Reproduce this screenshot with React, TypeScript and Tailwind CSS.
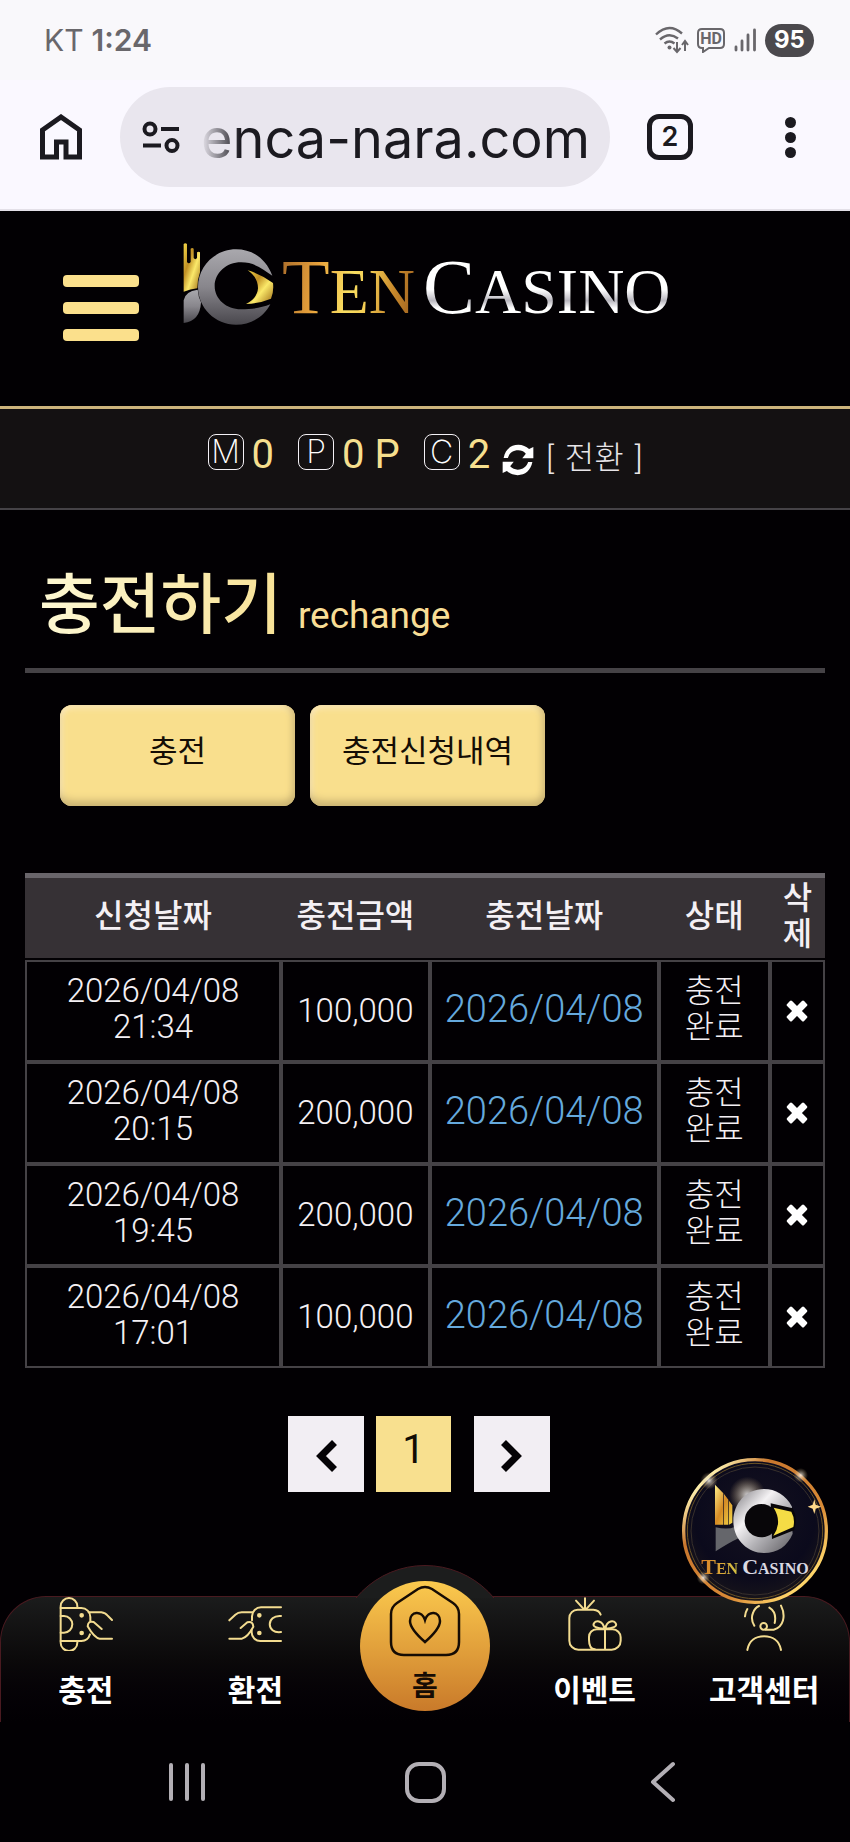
import type { ReactNode } from "react";

type Recharge = { date: string; time: string; amount: string; done: string };

const recharges: Recharge[] = [
  { date: "2026/04/08", time: "21:34", amount: "100,000", done: "2026/04/08" },
  { date: "2026/04/08", time: "20:15", amount: "200,000", done: "2026/04/08" },
  { date: "2026/04/08", time: "19:45", amount: "200,000", done: "2026/04/08" },
  { date: "2026/04/08", time: "17:01", amount: "100,000", done: "2026/04/08" },
];

function StatusBar() {
  return (
    <div className="flex h-20 items-center justify-between bg-[#f9f8fb] pr-9 pl-11 text-[#69676b]">
      <div className="flex items-baseline gap-2 text-[30px] leading-10">
        <span>KT</span>
        <span className="font-semibold">1:24</span>
      </div>
      <div className="flex items-center gap-2">
        <svg width="34" height="28" viewBox="0 0 34 28" fill="none" stroke="currentColor" strokeWidth="2.4">
          <path d="M1 8.5Q14-4 27 7.5M5 13.5q9-8 18-1M9.500 17.500q5-4 10 0" />
          <circle cx="14.500" cy="21.500" r="2" fill="currentColor" stroke="none" />
          <path d="M22 16v9M18.500 22l3.500 4 3.500-4M30 25v-9M27 19l3-4 3 4" strokeWidth="2" />
        </svg>
        <span className="relative flex h-6 items-start">
          <svg width="28" height="25" viewBox="0 0 28 25" fill="none" stroke="currentColor" strokeWidth="2">
            <path d="M5 1h18q4 0 4 4v11q0 4-4 4H12l-6 4v-4H5q-4 0-4-4V5q0-4 4-4z" />
          </svg>
          <span className="absolute inset-x-0 top-[3px] text-center font-[Roboto,sans-serif] text-[16px] leading-4 font-bold">
            HD
          </span>
        </span>
        <svg width="24" height="26" viewBox="0 0 24 26" fill="none" stroke="currentColor" strokeWidth="2.800" strokeLinecap="round">
          <path d="M3 20v3M9 14v9M15 8v15M21.500 3v20" />
        </svg>
        <span className="flex h-[33px] w-[49px] items-center justify-center rounded-full bg-[#4b494d] text-[24px] font-bold text-white">
          95
        </span>
      </div>
    </div>
  );
}

function BrowserBar() {
  return (
    <div className="flex h-[131px] items-start border-b-2 border-[#e3e0e8] bg-[#faf8ff] pt-[7px] pl-10 text-[#1b1a20]">
      <button aria-label="홈페이지" className="flex h-[100px] items-center">
        <svg width="42" height="46" viewBox="0 0 42 46" fill="none" stroke="currentColor" strokeWidth="5">
          <path d="M2.500 43V16L21 3l18.500 13v27H26V28h-9.500v15z" />
        </svg>
      </button>
      <div className="ml-[38px] flex h-[100px] min-w-0 flex-1 items-center justify-between rounded-full bg-[#e9e6ee] pr-5 pl-[22px]">
        <svg width="38" height="34" viewBox="0 0 38 34" fill="none" stroke="currentColor" strokeWidth="4" className="shrink-0">
          <circle cx="8" cy="9" r="5.500" />
          <path d="M19 9h18M1 25.500h18" />
          <circle cx="30" cy="25.500" r="5.500" />
        </svg>
        <span className="bg-linear-to-r from-transparent to-[#1b1a20] to-10% bg-clip-text pt-1 text-[54px] leading-[72px] whitespace-nowrap text-transparent">
          enca-nara.com
        </span>
      </div>
      <button aria-label="탭" className="ml-[37px] flex h-[100px] items-center">
        <span className="flex h-[46px] w-[46px] items-center justify-center rounded-xl border-[5px] border-current text-[27px] font-semibold">
          2
        </span>
      </button>
      <button aria-label="메뉴" className="mr-[54px] ml-[92px] flex h-[100px] flex-col items-center justify-center gap-1">
        <span className="h-[11px] w-[11px] rounded-full bg-current" />
        <span className="h-[11px] w-[11px] rounded-full bg-current" />
        <span className="h-[11px] w-[11px] rounded-full bg-current" />
      </button>
    </div>
  );
}

function LogoMark() {
  return (
    <svg width="91" height="82" viewBox="551 98 273 246" className="shrink-0">
      <defs>
        <linearGradient id="steel" x1="0" y1="0" x2="0" y2="1">
          <stop offset="0" stopColor="#a9a8ad" />
          <stop offset="0.5" stopColor="#88868c" />
          <stop offset="1" stopColor="#49474d" />
        </linearGradient>
        <linearGradient id="gold" x1="0" y1="0" x2="1" y2="1">
          <stop offset="0" stopColor="#f3d748" />
          <stop offset="0.35" stopColor="#c08f24" />
          <stop offset="0.6" stopColor="#fbe96a" />
          <stop offset="1" stopColor="#9c6a14" />
        </linearGradient>
      </defs>
      <path
        fill="url(#gold)"
        d="M553 101q5-5 10 0v54q5 8 11 0v-40q5-4 9 0v28q5 7 10 0v-17q5-4 9 0v60q-8 22-8 48-21 2-41 10z"
      />
      <path fill="url(#steel)" d="M553 338v-68q4-27 42-32 2 22 10 38-3 57-52 62z" />
      <path
        fill="url(#steel)"
        d="M819 196C800 145 760 117 710 117c-62 0-114 50-114 113s52 113 114 113c44 0 84-23 103-61-28 11-55 15-88 15-44 0-79-31-79-70s35-71 79-71c42 0 66 21 94 40z"
      />
      <path fill="url(#gold)" d="M745 180q40 11 76 38 3 26-6 47-34 14-75 16 34-17 36-47 0-33-31-54z" />
    </svg>
  );
}

function SiteHeader() {
  return (
    <header className="flex h-[198px] items-start border-b-[3px] border-[#cdb47c] bg-[#020003] pl-[63px]">
      <button aria-label="전체 메뉴" className="mt-16 flex w-[76px] shrink-0 flex-col gap-[15px]">
        <span className="h-3 rounded-sm bg-[#fbe08c]" />
        <span className="h-3 rounded-sm bg-[#fbe08c]" />
        <span className="h-3 rounded-sm bg-[#fbe08c]" />
      </button>
      <a href="#main" className="mt-8 ml-11 flex items-start whitespace-nowrap">
        <LogoMark />
        <span className="ml-2 flex items-baseline gap-2 font-['Liberation_Serif',serif] text-[64px] leading-[88px]">
          <span className="bg-linear-[100deg,#a86a2a_0%,#e9a33c_28%,#f8de62_50%,#f5cf55_62%,#c98a2c_80%,#96591d_100%] bg-clip-text text-transparent">
            <span className="text-[78px]">T</span>EN
          </span>
          <span className="bg-linear-[180deg,#ffffff_50%,#b9b7bf_62%,#ffffff_70%] bg-clip-text text-transparent">
            <span className="text-[78px]">C</span>ASINO
          </span>
        </span>
      </a>
    </header>
  );
}

function LetterBox({ children }: { children: ReactNode }) {
  return (
    <span className="flex h-9 w-9 items-center justify-center rounded-lg border border-[#f4f1f6] font-[Inter,sans-serif] text-[32px] font-extralight text-white">
      {children}
    </span>
  );
}

function BalanceBar() {
  return (
    <div className="flex h-[101px] items-start justify-center border-b-2 border-[#454246] bg-[#141112] pt-[25px] text-[40px] leading-9 text-[#f6df8e]">
      <div className="flex gap-2">
        <LetterBox>M</LetterBox>
        <span className="pt-[3px]">0</span>
      </div>
      <div className="ml-6 flex gap-2">
        <LetterBox>P</LetterBox>
        <span className="pt-[3px]">0 P</span>
      </div>
      <div className="ml-6 flex gap-2">
        <LetterBox>C</LetterBox>
        <span className="pt-[3px]">2</span>
      </div>
      <button aria-label="새로고침" className="ml-3 pt-[10px] text-white">
        <svg width="32" height="32" viewBox="230 700 98 97" fill="currentColor">
          <path d="M235 742C240 716 257 702 280 702c13 0 24 5 33 13l13-6v34h-34l11-14c-7-7-14-10-23-10-16 0-27 8-32 23z" />
          <path d="M323 755C318 781 301 795 278 795c-13 0-24-5-33-13l-13 6v-34h34l-11 14c7 7 14 10 23 10 16 0 27-8 32-23z" />
        </svg>
      </button>
      <button className="ml-3 flex gap-[11px] pt-1 text-[32px] leading-10 font-light whitespace-nowrap text-[#e8e5e8]">
        <span>[</span>
        <span>전환</span>
        <span>]</span>
      </button>
    </div>
  );
}

function GoldButton({ children }: { children: ReactNode }) {
  return (
    <button className="h-[101px] w-[235px] rounded-xl bg-[#f9df8d] pb-[6px] text-[31px] text-[#140d05] shadow-[inset_0_-8px_8px_-3px_#c9b272,inset_-6px_0_6px_-3px_#d6be7c,inset_0_5px_6px_-2px_#fbe9bb,inset_5px_0_6px_-3px_#fbe9bb]">
      {children}
    </button>
  );
}

function RechargeTable() {
  const cell = "h-[102px] border-2 border-[#454246] p-0 font-light";
  return (
    <table className="mt-[67px] w-full table-fixed border-separate border-spacing-0 text-center text-[32px] leading-9 text-[#f4f0f4]">
      <colgroup>
        <col className="w-[32%]" />
        <col className="w-[18.600%]" />
        <col className="w-[28.600%]" />
        <col className="w-[13.900%]" />
        <col />
      </colgroup>
      <thead>
        <tr>
          {["신청날짜", "충전금액", "충전날짜", "상태", "삭제"].map((title) => (
            <th
              key={title}
              scope="col"
              className="h-[87px] border-t-[5px] border-b-2 border-t-[#69656a] border-b-[#020003] bg-[#363135] px-2 py-0 pb-1 font-medium break-all"
            >
              {title}
            </th>
          ))}
        </tr>
      </thead>
      <tbody>
        {recharges.map((row) => (
          <tr key={row.time}>
            <td className={cell}>
              <div className="pb-1 text-[33px] leading-9">
                {row.date}
                <br />
                {row.time}
              </div>
            </td>
            <td className={`${cell} text-[33px]`}>{row.amount}</td>
            <td className={`${cell} text-[38px] text-[#65a9dd]`}>
              <div className="pb-1">{row.done}</div>
            </td>
            <td className={cell}>
              <div className="pb-1">
                충전
                <br />
                완료
              </div>
            </td>
            <td className={cell}>
              <button aria-label="삭제" className="block w-full">
                <svg width="22" height="22" viewBox="0 0 22 22" fill="#fff" className="mx-auto">
                  <rect x="-1" y="7.500" width="24" height="7" rx="1.500" transform="rotate(45 11 11)" />
                  <rect x="-1" y="7.500" width="24" height="7" rx="1.500" transform="rotate(-45 11 11)" />
                </svg>
              </button>
            </td>
          </tr>
        ))}
      </tbody>
    </table>
  );
}

function Pagination() {
  return (
    <nav aria-label="페이지" className="mt-12 flex justify-center pr-3">
      <button aria-label="이전" className="flex h-[76px] w-[76px] items-center justify-center bg-[#f2eef3] pt-1">
        <svg width="24" height="34" viewBox="0 0 24 34" fill="none" stroke="#050306" strokeWidth="7">
          <path d="M20.500 3.500 7 17l13.500 13.500" />
        </svg>
      </button>
      <button aria-current="page" className="ml-3 h-[76px] w-[75px] bg-[#f8e08f] pb-2 text-[40px] text-[#120c04]">
        1
      </button>
      <button aria-label="다음" className="ml-[23px] flex h-[76px] w-[76px] items-center justify-center bg-[#f2eef3] pt-1">
        <svg width="24" height="34" viewBox="0 0 24 34" fill="none" stroke="#050306" strokeWidth="7">
          <path d="M3.500 3.500 17 17 3.500 30.500" />
        </svg>
      </button>
    </nav>
  );
}

function CasinoBadge() {
  return (
    <a href="#casino" className="absolute -top-[139px] right-[21px] z-10 block h-[148px] w-[148px]">
      <svg width="148" height="148" viewBox="31 51 444 444">
        <defs>
          <radialGradient id="night" cx="0.5" cy="0.4" r="0.6">
            <stop offset="0" stopColor="#15121f" />
            <stop offset="0.7" stopColor="#0b0a1c" />
            <stop offset="1" stopColor="#19151a" />
          </radialGradient>
          <linearGradient id="ring" x1="0" y1="0" x2="1" y2="1">
            <stop offset="0" stopColor="#c7782a" />
            <stop offset="0.14" stopColor="#fff2b0" />
            <stop offset="0.3" stopColor="#c9772e" />
            <stop offset="0.65" stopColor="#d98a36" />
            <stop offset="0.85" stopColor="#ffd66a" />
            <stop offset="1" stopColor="#b8692b" />
          </linearGradient>
          <linearGradient id="silver" x1="0" y1="0" x2="1" y2="1">
            <stop offset="0" stopColor="#77757a" />
            <stop offset="0.35" stopColor="#f4f2f4" />
            <stop offset="0.6" stopColor="#b5b4b8" />
            <stop offset="1" stopColor="#5d5b60" />
          </linearGradient>
          <linearGradient id="amber" x1="0" y1="0" x2="1" y2="1">
            <stop offset="0" stopColor="#fff08a" />
            <stop offset="0.5" stopColor="#d58a24" />
            <stop offset="1" stopColor="#f4d84a" />
          </linearGradient>
          <radialGradient id="glow">
            <stop offset="0" stopColor="#fff" stopOpacity="0.8" />
            <stop offset="1" stopColor="#c7a66a" stopOpacity="0" />
          </radialGradient>
        </defs>
        <circle cx="253" cy="273" r="214" fill="url(#night)" stroke="url(#ring)" strokeWidth="10" />
        <circle cx="253" cy="273" r="203" fill="none" stroke="#6a5326" strokeWidth="3" />
        <circle cx="253" cy="273" r="192" fill="none" stroke="#38302c" strokeWidth="3" />
        <circle cx="230" cy="165" r="55" fill="url(#glow)" />
        <path d="M133 134 158 160v94h-25zM160 162l13 17v75h-13zM175 182l10 14v52l-10 6z" fill="url(#amber)" />
        <path d="M135 262q38 8 58-2 4 22 12 34-30 14-70 40z" fill="#65666b" />
        <path
          d="M364 200C346 165 314 147 280 147c-53 0-92 43-92 96s40 96 92 96c40 0 70-20 86-58-4-30-4-60-2-81z"
          fill="url(#silver)"
        />
        <circle cx="272" cy="242" r="50" fill="#080609" />
        <path d="M300 190 366 205q16 28 4 66l-66 26z" fill="#080609" />
        <path d="M309 203 362 215q12 22 6 46l-60 26q28-40 1-84z" fill="#f5dc45" />
        <path d="M431 178l4 16 17 6-17 6-4 16-5-16-15-6 15-6z" fill="#ffd98a" />
        <circle cx="115" cy="122" r="26" fill="url(#glow)" />
        <circle cx="98" cy="413" r="20" fill="url(#glow)" />
        <circle cx="390" cy="106" r="22" fill="url(#glow)" />
      </svg>
      <span className="absolute inset-x-0 top-[96px] flex items-baseline justify-center gap-1 font-['Liberation_Serif',serif] text-[16px] leading-7 font-bold whitespace-nowrap">
        <span className="bg-linear-to-r from-[#d97f27] to-[#d3c344] bg-clip-text text-transparent">
          <span className="text-[22px]">T</span>EN
        </span>
        <span className="text-[#d9d8e2]">
          <span className="text-[22px]">C</span>ASINO
        </span>
      </span>
    </a>
  );
}

function NavItem({ label, children }: { label: string; children: ReactNode }) {
  return (
    <a href={`#${label}`} className="flex flex-1 flex-col items-center text-[30px] leading-9 font-bold whitespace-nowrap text-white">
      {children}
      <span className="mt-[22px]">{label}</span>
    </a>
  );
}

const line = {
  width: 54,
  height: 54,
  fill: "none",
  stroke: "#f3dc90",
  strokeWidth: 6,
  strokeLinecap: "round" as const,
  strokeLinejoin: "round" as const,
};

function BottomNav() {
  return (
    <div className="relative mt-auto">
      <CasinoBadge />
      <nav className="relative flex h-[126px] rounded-t-[46px] border border-b-0 border-[#4a1a20] bg-linear-to-b from-[#1b1c1c] via-[#0b090a] via-50% to-[#020003]">
        <span className="absolute -top-8 left-1/2 h-[33px] w-40 -translate-x-1/2 overflow-hidden">
          <span className="absolute top-0 left-1/2 h-[180px] w-[180px] -translate-x-1/2 rounded-full border border-[#4a1a20] bg-[#1c1d1d]" />
        </span>
        <NavItem label="충전">
          <svg {...line} viewBox="173 134 162 162">
            <path d="M178 270V162a25 25 0 0 1 50 0v3M228 268v3a25 25 0 0 1-50 0" />
            <path d="M178 167h62a27 27 0 0 1 27 27v12M178 266h62q20 0 26-20" />
            <path d="M178 191h10a25 25 0 0 1 0 50h-10" />
            <path d="M262 180h38q12 1 20 11l12 12M301 230l-24-21q-17-5-18 13 20 35 36 37h37" />
            <circle cx="241" cy="189" r="4" fill="#f3dc90" />
            <circle cx="241" cy="242" r="4" fill="#f3dc90" />
          </svg>
        </NavItem>
        <NavItem label="환전">
          <svg {...line} viewBox="684 134 162 162">
            <path d="M843 165h-60a27 27 0 0 0-27 27v12M755 232v8a26 26 0 0 0 26 26h62" />
            <path d="M843 191c-45-4-45 54 0 48" />
            <path d="M757 180h-32q-11 0-19 7l-18 17M722 227l20-17q17-5 18 13-16 30-34 36h-38" />
            <circle cx="778" cy="189" r="4" fill="#f3dc90" />
            <circle cx="778" cy="242" r="4" fill="#f3dc90" />
          </svg>
        </NavItem>
        <div className="flex flex-1 justify-center">
          <a
            href="#home"
            className="relative -mt-4 flex h-[130px] w-[130px] flex-col items-center rounded-full bg-linear-to-b from-[#fbca4e] to-[#c97a2a] pt-[3px] text-[28px] leading-9 font-bold text-[#160c04]"
          >
            <svg width="72" height="73" viewBox="0 0 72 73" fill="none" stroke="currentColor" strokeWidth="2.500">
              <path d="M2 30q0-7 6-11L29 5q7-4 14 0l21 14q6 4 6 11v28q0 13-13 13H15Q2 71 2 58z" />
              <path d="M36 58C28 51 21 44 21 37c0-10 12-11 15-1 3-10 15-9 15 1 0 7-7 14-15 21z" />
            </svg>
            <span className="mt-3">홈</span>
          </a>
        </div>
        <NavItem label="이벤트">
          <svg {...line} viewBox="429 134 162 162">
            <path d="M480 138v30M453 145l22 24M507 145l-22 24" />
            <path d="M527 187q-5-14-22-15h-47a25 25 0 0 0-25 25v68a27 27 0 0 0 27 27h100a27 27 0 0 0 27-27v-10a24 24 0 0 0-24-24h-48a23 23 0 0 0-23 23v8q0 28 18 29M540 231v59" />
            <path d="M538 229c-23 0-35-7-32-14 4-13 28-12 32 14zM541 229c23 0 35-7 32-14-4-13-28-12-32 14z" />
          </svg>
        </NavItem>
        <NavItem label="고객센터">
          <svg {...line} viewBox="939 134 162 162">
            <path d="M963 192q1-12 7-22M991 220q-12-20-4-38 5-15 18-21M1036 166q23 14 16 46M1071 160c15 30 8 64-22 72h-24" />
            <circle cx="1019" cy="222" r="10" />
            <path d="M970 293c5-28 25-41 50-41s46 13 51 41" />
          </svg>
        </NavItem>
      </nav>
    </div>
  );
}

function SystemBar() {
  return (
    <div className="grid h-[120px] grid-cols-3 items-center justify-items-center px-[68px] text-[#b3afb5]">
      <button aria-label="최근 앱" className="flex gap-3">
        <span className="h-[38px] w-1 rounded-full bg-current" />
        <span className="h-[38px] w-1 rounded-full bg-current" />
        <span className="h-[38px] w-1 rounded-full bg-current" />
      </button>
      <button aria-label="홈 화면" className="h-[41px] w-[41px] rounded-[14px] border-4 border-current" />
      <button aria-label="뒤로">
        <svg width="26" height="42" viewBox="0 0 26 42" fill="none" stroke="currentColor" strokeWidth="4" strokeLinecap="round" strokeLinejoin="round">
          <path d="M23 3 3 21l20 18" />
        </svg>
      </button>
    </div>
  );
}

export default function App() {
  return (
    <div className="flex min-h-screen flex-col bg-[#020003] font-[Inter,'Noto_Sans_CJK_KR',sans-serif]">
      <StatusBar />
      <BrowserBar />
      <div className="flex flex-1 flex-col font-[Roboto,'Noto_Sans_CJK_KR',sans-serif]">
        <SiteHeader />
        <BalanceBar />
        <main id="main" className="px-[25px] pb-16">
          <h1 className="flex items-baseline gap-4 border-b-[5px] border-[#454246] pt-14 pb-[22px] pl-[14px] leading-[80px]">
            <span className="bg-linear-to-r from-[#fdf8d3] to-[#f8e296] bg-clip-text text-[66px] font-medium text-transparent">
              충전하기
            </span>
            <span className="text-[37px] leading-10 text-[#f8dd95]">rechange</span>
          </h1>
          <div className="mt-8 ml-[35px] flex gap-[15px]">
            <GoldButton>충전</GoldButton>
            <GoldButton>충전신청내역</GoldButton>
          </div>
          <RechargeTable />
          <Pagination />
        </main>
        <BottomNav />
        <SystemBar />
      </div>
    </div>
  );
}
